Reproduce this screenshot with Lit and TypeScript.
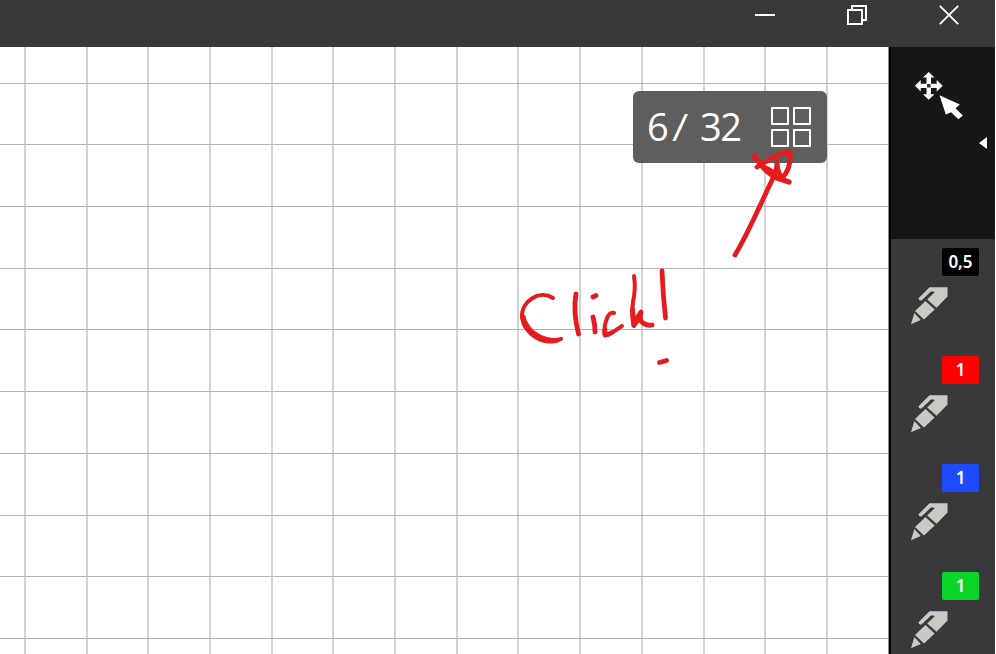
import { LitElement, html, css, svg } from "lit";
import { customElement } from "lit/decorators.js";

const columns = [24, 86, 147, 209, 271, 332, 394, 456, 517, 579, 641, 703, 764, 826];
const rows = [36, 97, 159, 221, 282, 344, 406, 468, 529, 591];
const pens = [
  { size: "0,5", color: "#000000" },
  { size: "1", color: "#ff0000" },
  { size: "1", color: "#1f4bff" },
  { size: "1", color: "#0ad428" },
];

@customElement("window-bar")
class WindowBar extends LitElement {
  static styles = css`
    :host { display: flex; justify-content: flex-end; height: 47px; background: #39393b; }
    .control { width: 92px; height: 30px; display: flex; align-items: center; justify-content: center; }
    svg { display: block; width: 22px; height: 22px; fill: none; stroke: #fff; }
  `;
  render() {
    return html`
      <div class="control"><svg viewBox="0 0 22 22"><path d="M1 11H21" stroke-width="2" shape-rendering="crispEdges" /></svg></div>
      <div class="control"><svg viewBox="0 0 22 22"><path d="M2 6H16V20H2ZM6 5V2H20V16H17" stroke-width="2" /></svg></div>
      <div class="control"><svg viewBox="0 0 22 22"><path d="M1.8 1.8L20.2 20.2M20.2 1.8L1.8 20.2" stroke-width="1.8" /></svg></div>
    `;
  }
}

@customElement("page-canvas")
class PageCanvas extends LitElement {
  static styles = css`
    :host { display: block; position: relative; width: 888px; background: #fff; overflow: hidden; border-right: 1px solid #8c8c8c; box-sizing: content-box; }
    .layer { position: absolute; left: 0; top: 0; width: 888px; height: 607px; }
    .counter { position: absolute; right: 61px; top: 44px; width: 194px; height: 72px; box-sizing: border-box; padding: 0 16px 0 14px; display: flex; align-items: center; justify-content: space-between; border-radius: 6px; background: #5e5e5e; color: #fff; }
    .count { display: block; width: 100px; height: 72px; }
    .count text { fill: #fff; font: 38px "Open Sans", "Noto Sans", sans-serif; }
    .tiles { display: grid; grid-template-columns: 18px 18px; gap: 4px; }
    .tile { width: 18px; height: 18px; box-sizing: border-box; border: 2px solid #fff; }
    .ink { fill: none; stroke: #e51b1f; stroke-width: 4.8; stroke-linecap: round; stroke-linejoin: round; }
    .wide { stroke-width: 5.4; }
    .fine { stroke-width: 4; }
    .fill { fill: #e51b1f; stroke-width: 1; }
  `;
  render() {
    return html`
      <svg class="layer" viewBox="0 0 888 607" shape-rendering="crispEdges">
        ${columns.map((x) => svg`<rect x=${x} y="0" width="2" height="607" fill="#d2d2d2" />`)}
        ${rows.map((y) => svg`<rect x="0" y=${y} width="888" height="1" fill="#b3b3b3" />`)}
      </svg>
      <div class="counter">
        <svg class="count" viewBox="0 0 100 72">
          <text x="0" y="49.500">6</text>
          <text transform="translate(25 49.500) skewX(-5)">/</text>
          <text x="53" y="49.500" textLength="42" lengthAdjust="spacing">32</text>
        </svg>
        <div class="tiles"><i class="tile"></i><i class="tile"></i><i class="tile"></i><i class="tile"></i></div>
      </div>
      <svg class="layer ink" viewBox="0 47 888 607">
        <path d="M735 255C744 240 751 225 758 210L773 178Q777 170 777 163" />
        <path d="M754 156L763 167Q768 173 777 178L789 182" class="wide" />
        <path d="M757 167L767 161Q778 153 790 152C791 162 789 171 782 178Q778 173 777 164" />
        <path d="M763 167Q770 169 775 174" />
        <path d="M553 298C539 289 521 302 522 317C524 333 543 346 561 339" class="fine" stroke-width="5" />
        <path class="fill" d="M520.500 316C522 334 541 347 558 342Q563 340 562 337.500C544 342 527 329 525 316Z" />
        <path d="M576 294C574 305 575 320 578.500 334" />
        <path d="M593 317Q595 324 595 332M593 297L596 295.500" />
        <path d="M614 313C608 311 604 323 604.500 334C608 337 616 330 622 326" class="fine" />
        <path d="M605 330V335Q608 335 611 333" />
        <path d="M634 276Q636 289 633 302Q631 317 634 326" class="fine" />
        <path d="M634 325Q637 317 641 312Q639 321 643 323Q647 326 652 325" />
        <path d="M632.500 309L634 325L640 317" />
        <path d="M662 271Q663 295 665.500 318" />
        <path d="M659.500 362.500L666.500 360.500" />
      </svg>
    `;
  }
}

@customElement("pen-tool")
class PenTool extends LitElement {
  static properties = { size: {}, color: {} };
  static styles = css`
    :host { display: flex; flex-direction: column; height: 108px; flex: none; }
    .badge { align-self: flex-end; width: 37px; height: 28px; margin: 9px 16px 0 0; border-radius: 2px; color: #fff; font: 600 17px/27px "Noto Sans", "Open Sans", sans-serif; text-align: center; }
    svg { display: block; width: 38px; height: 38px; margin: 11px 0 0 19px; fill: #cbc9c3; }
  `;
  declare size: string;
  declare color: string;
  render() {
    return html`
      <div class="badge" style="background:${this.color}">${this.size}</div>
      <svg viewBox="0 0 38 38"><path d="M19.500 0.300H37.500V9.500L26.500 20.800L17.200 12.400L24.500 5.500Q25 4 21 4.500L11.500 13.500Q8.500 14 8.500 11.200ZM15.500 14L24.700 22.500L14 32.500L5 24ZM4.300 26L10.800 33L1 37.300Z" /></svg>
    `;
  }
}

@customElement("tool-rail")
class ToolRail extends LitElement {
  static styles = css`
    :host { display: flex; flex-direction: column; flex: 1; overflow: hidden; background: #39393b; border-left: 2px solid #000; }
    .active { height: 192px; flex: none; background: #171717; display: flex; justify-content: space-between; }
    .move { width: 50px; height: 50px; margin: 24px 0 0 23px; fill: #fff; }
    .expand { width: 8px; height: 12px; margin: 90px 8px 0 0; fill: #fff; }
  `;
  render() {
    return html`
      <div class="active">
        <svg class="move" viewBox="914 71 50 50">
          <path d="M928.700 72L934.500 77.500H931V83.700H936.700V80L942.700 85.800L936.700 91.600V88H931V94.300H934.500L928.700 99.800L923 94.300H926.500V88H920.700V91.600L915 85.800L920.700 80V83.700H926.500V77.500H923Z" />
          <rect x="927" y="84" width="3.500" height="3.500" fill="#303030" />
          <path d="M939.500 95.300L959.800 104.500L955.500 108.300L962.800 115.500L958.500 119.300L951 112.200L945.800 114.500Z" />
        </svg>
        <svg class="expand" viewBox="0 0 8 12"><path d="M8 0V12L0 6Z" /></svg>
      </div>
      ${pens.map((p) => html`<pen-tool .size=${p.size} .color=${p.color}></pen-tool>`)}
    `;
  }
}

@customElement("app-root")
class AppRoot extends LitElement {
  static styles = css`
    :host { display: flex; flex-direction: column; width: 995px; height: 654px; overflow: hidden; }
    .work { display: flex; flex: 1; min-height: 0; }
  `;
  render() {
    return html`<window-bar></window-bar><div class="work"><page-canvas></page-canvas><tool-rail></tool-rail></div>`;
  }
}
